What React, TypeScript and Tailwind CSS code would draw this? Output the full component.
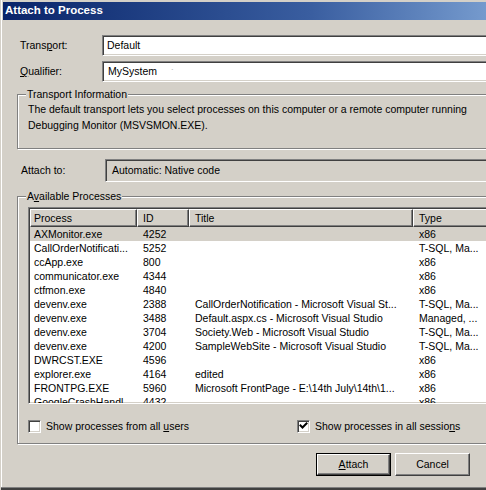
import React from "react";

type Row = { name: string; id: string; title: string; type: string };

const rows: Row[] = [
  { name: "AXMonitor.exe", id: "4252", title: "", type: "x86" },
  { name: "CallOrderNotificati...", id: "5252", title: "", type: "T-SQL, Ma..." },
  { name: "ccApp.exe", id: "800", title: "", type: "x86" },
  { name: "communicator.exe", id: "4344", title: "", type: "x86" },
  { name: "ctfmon.exe", id: "4840", title: "", type: "x86" },
  { name: "devenv.exe", id: "2388", title: "CallOrderNotification - Microsoft Visual St...", type: "T-SQL, Ma..." },
  { name: "devenv.exe", id: "3488", title: "Default.aspx.cs - Microsoft Visual Studio", type: "Managed, ..." },
  { name: "devenv.exe", id: "3704", title: "Society.Web - Microsoft Visual Studio", type: "T-SQL, Ma..." },
  { name: "devenv.exe", id: "4200", title: "SampleWebSite - Microsoft Visual Studio", type: "T-SQL, Ma..." },
  { name: "DWRCST.EXE", id: "4596", title: "", type: "x86" },
  { name: "explorer.exe", id: "4164", title: "edited", type: "x86" },
  { name: "FRONTPG.EXE", id: "5960", title: "Microsoft FrontPage - E:\\14th July\\14th\\1...", type: "x86" },
  { name: "GoogleCrashHandl", id: "4432", title: "", type: "x86" },
];

// sunken 3D edge (text boxes, list view)
const sunken =
  "border border-t-[#808080] border-l-[#808080] border-r-white border-b-white shadow-[inset_1px_1px_0_#404040,inset_-1px_-1px_0_#d4d0c8]";
// raised 3D edge (buttons, header cells)
const raised =
  "border border-t-white border-l-white border-r-[#404040] border-b-[#404040] shadow-[inset_-1px_-1px_0_#808080]";

function GroupBox({ label, className, children }: { label: React.ReactNode; className: string; children: React.ReactNode }) {
  return (
    <div className={`relative border border-[#808080] shadow-[1px_1px_0_#fff,inset_1px_1px_0_#fff] ${className}`}>
      <span className="absolute left-[8px] -top-[7px] px-[1px] bg-[#d4d0c8] leading-[13px]">{label}</span>
      {children}
    </div>
  );
}

function CheckBox({ checked }: { checked?: boolean }) {
  return (
    <div className={`w-[13px] h-[13px] bg-white shrink-0 flex items-center justify-center ${sunken}`}>
      {checked && (
        <svg width="9" height="9" viewBox="0 0 9 9">
          <path d="M1.5 3.5 L3.5 5.5 L7.5 1.5" stroke="#000" strokeWidth="2" fill="none" strokeLinecap="square" />
        </svg>
      )}
    </div>
  );
}

export default function App() {
  return (
    <div className="w-[486px] h-[490px] overflow-hidden bg-[#d4d0c8] text-black font-['Liberation_Sans',Arial,sans-serif] text-[10.5px] leading-none">
      <div className="w-[620px] h-[490px] flex flex-col border-l border-l-[#d4d0c8] shadow-[inset_1px_0_0_#fff]">
        {/* window body */}
        <div className="flex-1 flex flex-col pl-[2px] pt-[2px]">
          {/* title bar */}
          <div className="h-[18px] bg-gradient-to-r from-[#0a246a] via-[#3a5ea0] to-[#a6caf0] flex items-center pl-[2px]">
            <span className="text-white font-bold text-[11.5px]">Attach to Process</span>
          </div>

          {/* Transport */}
          <div className="flex items-center mt-[15px]">
            <span className="w-[99px] pl-[17px]">
              Trans<span className="underline">p</span>ort:
            </span>
            <div className={`w-[480px] h-[21px] bg-white flex items-center pl-[4px] ${sunken}`}>Default</div>
          </div>

          {/* Qualifier */}
          <div className="flex items-center mt-[5px]">
            <span className="w-[99px] pl-[17px]">
              <span className="underline">Q</span>ualifier:
            </span>
            <div className={`w-[480px] h-[21px] bg-white flex items-center pl-[5px] ${sunken}`}>
              MySystem<span className="ml-[14px] text-[#888] text-[8px]">`</span>
            </div>
          </div>

          {/* Transport Information */}
          <GroupBox label="Transport Information" className="ml-[14px] mt-[12px] h-[55px] w-[560px]">
            <div className="pl-[10px] pt-[6px] leading-[16px]">
              <div>The default transport lets you select processes on this computer or a remote computer running</div>
              <div>Debugging Monitor (MSVSMON.EXE).</div>
            </div>
          </GroupBox>

          {/* Attach to */}
          <div className="flex items-center mt-[10px]">
            <span className="w-[102px] pl-[18px]">Attach to:</span>
            <div className={`w-[480px] h-[23px] flex items-center pl-[6px] ${sunken}`}>Automatic: Native code</div>
          </div>

          {/* Available Processes */}
          <GroupBox
            label={
              <>
                A<span className="underline">v</span>ailable Processes
              </>
            }
            className="ml-[14px] mt-[14px] h-[248px] w-[560px]"
          >
            <div className="flex flex-col pl-[10px] pt-[10px]">
              <div className={`w-[540px] h-[197px] bg-white overflow-hidden ${sunken} p-[1px]`}>
                <div className="flex h-[18px] bg-[#d4d0c8]">
                  <div className={`w-[107px] shrink-0 flex items-center pl-[3px] ${raised}`}>Process</div>
                  <div className={`w-[52px] shrink-0 flex items-center pl-[5px] ${raised}`}>ID</div>
                  <div className={`w-[224px] shrink-0 flex items-center pl-[5px] ${raised}`}>Title</div>
                  <div className={`w-[150px] shrink-0 flex items-center pl-[5px] ${raised}`}>Type</div>
                </div>
                {rows.map((r, i) => (
                  <div key={i} className={`flex h-[14px] items-center ${i === 0 ? "bg-[#d4d0c8]" : ""}`}>
                    <div className="w-[107px] shrink-0 pl-[4px] whitespace-nowrap">{r.name}</div>
                    <div className="w-[52px] shrink-0 pl-[6px]">{r.id}</div>
                    <div className="w-[224px] shrink-0 pl-[6px] whitespace-nowrap">{r.title}</div>
                    <div className="w-[150px] shrink-0 pl-[6px] whitespace-nowrap">{r.type}</div>
                  </div>
                ))}
              </div>

              <div className="flex items-center mt-[15px] h-[14px]">
                <div className="flex items-center gap-[5px] w-[269px]">
                  <CheckBox />
                  <span>
                    Show processes from all <span className="underline">u</span>sers
                  </span>
                </div>
                <div className="flex items-center gap-[5px]">
                  <CheckBox checked />
                  <span>
                    Show processes in all sessio<span className="underline">n</span>s
                  </span>
                </div>
              </div>
            </div>
          </GroupBox>

          {/* buttons */}
          <div className="flex mt-[9px] ml-[313px] gap-[4px]">
            <div className="border border-black">
              <div className={`w-[73px] h-[21px] flex items-center justify-center ${raised}`}>
                <span>
                  <span className="underline">A</span>ttach
                </span>
              </div>
            </div>
            <div className={`w-[75px] h-[23px] flex items-center justify-center ${raised}`}>Cancel</div>
          </div>
        </div>
        {/* bottom window frame */}
        <div className="h-[1px] bg-[#808080]" />
        <div className="h-[2px] bg-[#404040]" />
      </div>
    </div>
  );
}
